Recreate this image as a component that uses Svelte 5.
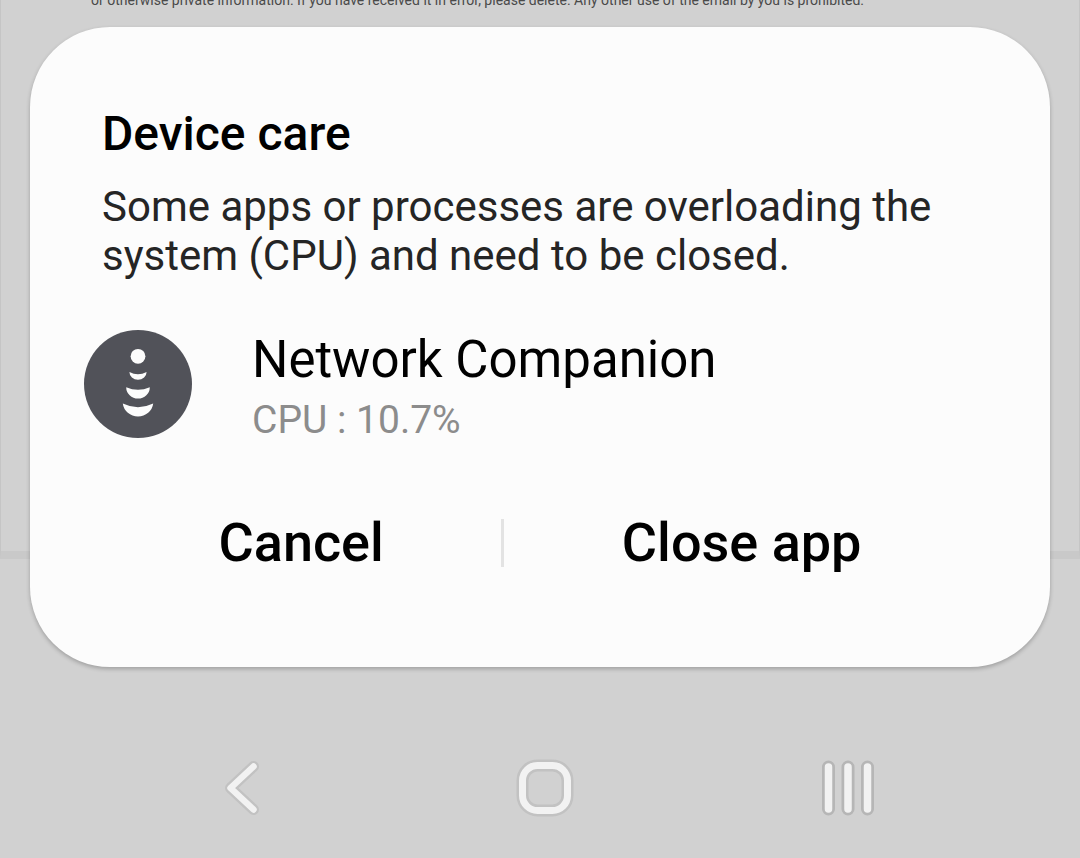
<script>
  const overloadedApps = [{ name: 'Network Companion', cpu: 10.7 }];

  let open = true;

  function dismiss() {
    open = false;
  }
</script>

<div class="screen">
  <div class="mail">
    <p class="mail-text">
      or otherwise private information. If you have received it in error, please delete. Any other use of the email by you is prohibited.
    </p>
  </div>

  <div class="front">
    {#if open}
      <div class="dialog" role="dialog" aria-labelledby="dialog-title" aria-describedby="dialog-message">
        <h1 class="title" id="dialog-title">Device care</h1>
        <p class="message" id="dialog-message">
          Some apps or processes are overloading the system (CPU) and need to be closed.
        </p>

        <ul class="apps">
          {#each overloadedApps as app}
            <li class="app">
              <svg class="app-icon" viewBox="0 0 108 108" aria-hidden="true">
                <circle cx="54" cy="54" r="54" fill="#515259" />
                <g fill="#fcfcfc">
                  <circle cx="54" cy="26.3" r="7.4" />
                  <path d="M45.400 42Q54 46.500 62.600 42A8.600 7.800 0 0 1 45.400 42Z" />
                  <path d="M42.200 57.200Q54 62.500 65.800 57.200A11.800 11.400 0 0 1 42.200 57.200Z" />
                  <path d="M38.800 73.600Q54 81 69.200 73.600A15.300 14.600 0 0 1 38.800 73.600Z" />
                </g>
              </svg>
              <div>
                <div class="app-name">{app.name}</div>
                <div class="app-usage">CPU : {app.cpu}%</div>
              </div>
            </li>
          {/each}
        </ul>

        <div class="actions">
          <button type="button" class="action" on:click={dismiss}>Cancel</button>
          <span class="divider"></span>
          <button type="button" class="action" on:click={dismiss}>Close app</button>
        </div>
      </div>
    {/if}

    <nav class="nav-bar">
      <button type="button" class="nav-button" aria-label="Back">
        <svg viewBox="0 0 64 64" fill="none" stroke-linecap="round" stroke-linejoin="round">
          <path d="M42.500 10.500L19.500 32 42.500 53.500" stroke="#c2c2c2" stroke-width="11" />
          <path d="M42.500 10.500L19.500 32 42.500 53.500" stroke="#f2f2f2" stroke-width="6.500" />
        </svg>
      </button>
      <button type="button" class="nav-button" aria-label="Home">
        <svg viewBox="0 0 64 64" fill="none">
          <rect x="9.500" y="9.500" width="45" height="45" rx="15" stroke="#c2c2c2" stroke-width="12" />
          <rect x="9.500" y="9.500" width="45" height="45" rx="15" stroke="#f2f2f2" stroke-width="7" />
        </svg>
      </button>
      <button type="button" class="nav-button" aria-label="Recent apps">
        <svg viewBox="0 0 64 64" fill="none" stroke-linecap="round">
          <path d="M12.500 11V53M32 11V53M51.500 11V53" stroke="#b6b6b6" stroke-width="13" />
          <path d="M12.500 11V53M32 11V53M51.500 11V53" stroke="#f2f2f2" stroke-width="7.500" />
        </svg>
      </button>
    </nav>
  </div>
</div>

<style>
  :global(body) {
    margin: 0;
    background: #d1d1d1;
  }

  /* The mail page and the dialog share one cell, so the dialog sits on top */
  .screen {
    display: grid;
    min-height: 100vh;
    overflow: hidden;
    background: #d1d1d1;
    font-family: Roboto, sans-serif;
  }

  .mail,
  .front {
    grid-area: 1 / 1;
    min-width: 0;
  }

  .mail {
    align-self: start;
    height: 551px;
    overflow: hidden;
    border: 1px solid #c5c5c5;
    border-top: 0;
    border-bottom: 8px solid #c9c9c9;
  }

  .mail-text {
    margin: -8px 90px 0;
    color: #4a4a4a;
    font-size: 14px;
    line-height: 16px;
    white-space: nowrap;
  }

  .front {
    display: flex;
    flex-direction: column;
    z-index: 1;
  }

  .dialog {
    margin: 27px 30px 0;
    padding: 79px 54px 88px;
    border-radius: 80px;
    background: #fcfcfc;
    box-shadow: 0 2px 4px rgba(0, 0, 0, 0.24);
  }

  .title {
    margin: 0 18px;
    color: #000;
    font-size: 48px;
    font-weight: 500;
    line-height: 56px;
  }

  .message {
    margin: 20px 18px 0;
    color: #252525;
    font-size: 42px;
    line-height: 49px;
  }

  .apps {
    margin: 50px 0 0;
    padding: 0;
    list-style: none;
  }

  .app {
    display: flex;
    align-items: flex-start;
    gap: 60px;
  }

  .app-icon {
    flex: none;
    width: 108px;
    height: 108px;
  }

  .app-name {
    color: #000;
    font-size: 51px;
    line-height: 60px;
  }

  .app-usage {
    color: #8c8c8c;
    font-size: 39px;
    line-height: 60px;
  }

  .actions {
    display: flex;
    align-items: center;
    margin-top: 57px;
    padding: 0 17px;
  }

  .action {
    flex: 1 1 auto;
    padding: 0;
    border: 0;
    background: none;
    color: #000;
    font: inherit;
    font-size: 54px;
    font-weight: 500;
    line-height: 72px;
    cursor: pointer;
  }

  .divider {
    width: 3px;
    height: 48px;
    background: #e3e3e3;
  }

  .nav-bar {
    display: flex;
    justify-content: space-around;
    margin-top: auto;
    padding: 0 81px 38px 92px;
  }

  .nav-button {
    padding: 0;
    border: 0;
    background: none;
    cursor: pointer;
  }

  .nav-button svg {
    display: block;
    width: 64px;
    height: 64px;
  }
</style>
